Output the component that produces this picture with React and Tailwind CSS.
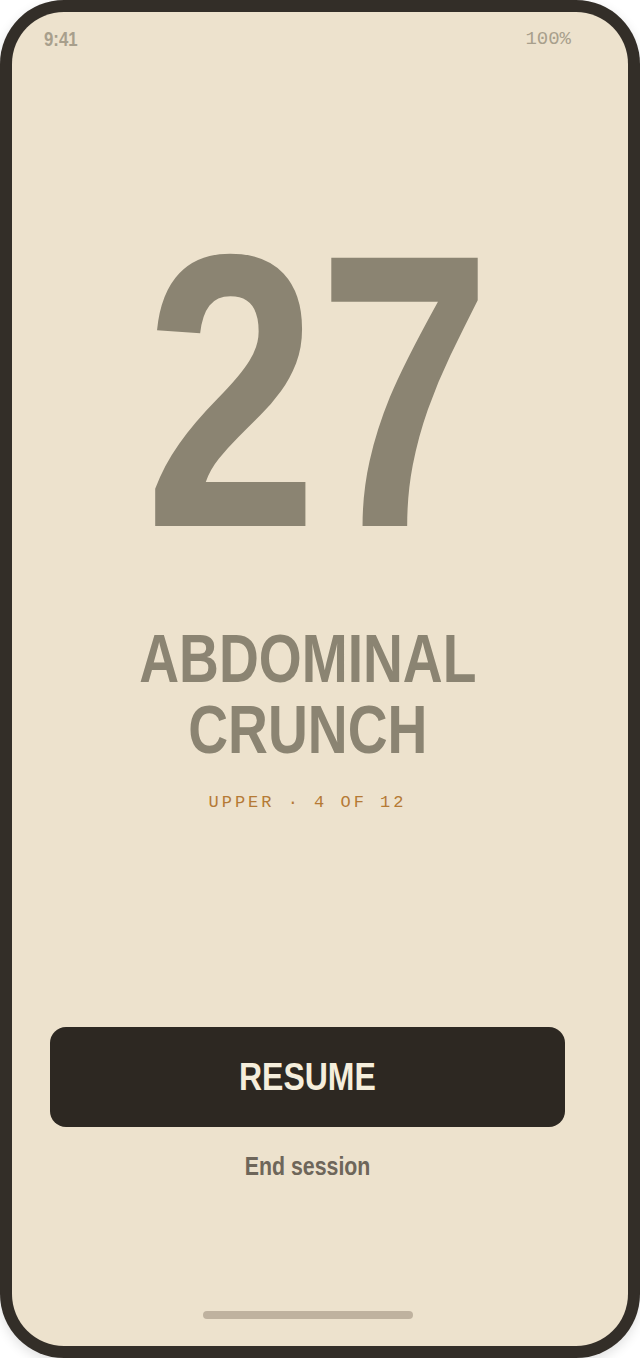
export default function App() {
  const sans = { fontFamily: '"Liberation Sans", Arial, sans-serif' };
  const mono = { fontFamily: '"Liberation Mono", "DejaVu Sans Mono", monospace' };

  return (
    <div className="min-h-[1358px] w-[640px] bg-white">
      <div className="h-[1358px] w-[640px] rounded-[64px] bg-[#332e28] p-[12px] shadow-[0_4px_12px_rgba(0,0,0,0.12)]">
        <div className="h-full w-full overflow-hidden rounded-[52px] bg-[#ede2cd]">
          {/* status bar */}
          <div className="flex w-full items-center justify-between pl-[32px] pr-[57px] pt-[15px] leading-[24px] text-[#a89f8c]">
            <span className="inline-block origin-left scale-x-[0.8] text-[21px] font-bold" style={sans}>
              9:41
            </span>
            <span className="text-[19px]" style={mono}>
              100%
            </span>
          </div>

          <div className="flex flex-col items-center pr-[25px]">
            {/* rep count */}
            <div
              className="ml-[20px] mt-[145px] inline-block scale-x-[0.8] text-[390px] font-bold leading-none text-[#8b8472]"
              style={sans}
            >
              27
            </div>

            {/* exercise */}
            <div
              className="mt-[37px] inline-block scale-x-[0.8] text-center text-[69px] font-bold uppercase leading-[71px] text-[#8b8472]"
              style={sans}
            >
              Abdominal
              <br />
              Crunch
            </div>
            <div className="mt-[28px] text-[17px] leading-[20px] tracking-[3px] text-[#b57a35]" style={mono}>
              UPPER · 4 OF 12
            </div>

            {/* actions */}
            <button className="mt-[214px] h-[100px] w-[515px] rounded-[16px] bg-[#2d2822] text-[#f5eedc]">
              <span className="inline-block scale-x-[0.82] text-[39px] font-bold" style={sans}>
                RESUME
              </span>
            </button>
            <button className="mt-[24px] leading-[30px] text-[#6e665a]">
              <span className="inline-block scale-x-[0.82] text-[26px] font-bold" style={sans}>
                End session
              </span>
            </button>

            <div className="mt-[127px] h-[8px] w-[210px] rounded-full bg-[#bfb29f]" />
          </div>
        </div>
      </div>
    </div>
  );
}
